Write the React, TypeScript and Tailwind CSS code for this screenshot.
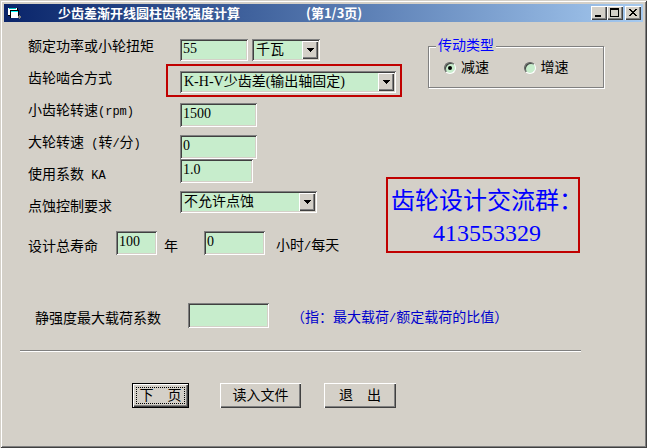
import React, { useState } from "react";

const sunken =
  "shadow-[inset_1px_1px_0_#808080,inset_-1px_-1px_0_#fff,inset_2px_2px_0_#404040,inset_-2px_-2px_0_#d4d0c8]";
const raised =
  "bg-[#d4d0c8] shadow-[inset_1px_1px_0_#fff,inset_-1px_-1px_0_#404040,inset_-2px_-2px_0_#808080]";

interface FieldProps {
  id: string;
  value?: string;
  label?: string;
  className: string;
}

function TextField({ id, value = "", label, className }: FieldProps) {
  return (
    <input
      id={id}
      type="text"
      aria-label={label}
      defaultValue={value}
      className={`block bg-[#c7edcc] px-[3px] pb-0.5 outline-none ${sunken} ${className}`}
    />
  );
}

interface ComboProps {
  id: string;
  options: string[];
  label?: string;
  className: string;
}

function Combo({ id, options, label, className }: ComboProps) {
  return (
    <div className={`relative h-[22px] ${className}`}>
      <select
        id={id}
        aria-label={label}
        className={`block h-full w-full appearance-none bg-[#c7edcc] pl-1 pr-5 outline-none ${sunken}`}
      >
        {options.map((option) => (
          <option key={option}>{option}</option>
        ))}
      </select>
      <span
        className={`pointer-events-none absolute inset-y-0.5 right-0.5 flex w-4 items-center justify-center ${raised}`}
      >
        <svg width="7" height="4" viewBox="0 0 7 4" shapeRendering="crispEdges">
          <path d="M0 0h7v1h-1v1h-1v1h-1v1h-1v-1h-1v-1h-1v-1h-1z" />
        </svg>
      </span>
    </div>
  );
}

interface RadioProps {
  label: string;
  checked: boolean;
  onSelect: () => void;
}

function Radio({ label, checked, onSelect }: RadioProps) {
  return (
    <label className="flex w-20 items-center gap-[5px]">
      <span className="relative flex size-3 items-center justify-center">
        <input
          type="radio"
          name="drive"
          checked={checked}
          onChange={onSelect}
          className="size-3 appearance-none rounded-full border border-t-[#606060] border-r-white border-b-white border-l-[#606060] bg-[#c7edcc] shadow-[inset_1px_1px_0_#404040]"
        />
        {checked && <span className="pointer-events-none absolute size-1 rounded-full bg-black" />}
      </span>
      {label}
    </label>
  );
}

function Mono({ children }: { children: React.ReactNode }) {
  return <span className="whitespace-pre font-['Liberation_Mono',monospace] text-[12px]">{children}</span>;
}

function TitleBar() {
  return (
    <header className="flex h-[18px] items-center bg-gradient-to-r from-[#0a246a] to-[#a6caf0] pl-1 pr-0.5 font-['Noto_Sans_CJK_SC',sans-serif] text-[13px] font-bold text-white">
      <svg width="14" height="12" viewBox="0 0 14 12" shapeRendering="crispEdges">
        <path fill="#000" d="M0 1h10v8H0z" />
        <path fill="#fff" d="M0 1h9v7H0z" />
        <path fill="#00c0c0" d="M1 1h7v1H1z" />
        <path fill="#000" d="M2 3h9v8H2z" />
        <path fill="#00ffff" d="M3 4h7v1H3z" />
        <path fill="#fff" d="M3 5h7v6H3z" />
        <path fill="#808080" d="M11 8h1v1h1v2h-1v1h-1v-1h-1V9h1z" />
      </svg>
      <h1 className="flex gap-[66px] whitespace-nowrap pl-9">
        <span>少齿差渐开线圆柱齿轮强度计算</span>
        <span>(第1/3页)</span>
      </h1>
      <div className="ml-auto flex">
        <button type="button" aria-label="最小化" className={`h-[14px] w-4 ${raised}`}>
          <svg width="16" height="14" viewBox="0 0 16 14" shapeRendering="crispEdges">
            <path d="M4 9h6v2H4z" />
          </svg>
        </button>
        <button type="button" aria-label="最大化" className={`h-[14px] w-4 ${raised}`}>
          <svg width="16" height="14" viewBox="0 0 16 14" shapeRendering="crispEdges">
            <path fillRule="evenodd" d="M3 2h9v9H3zM4 4v6h7V4z" />
          </svg>
        </button>
        <button type="button" aria-label="关闭" className={`ml-0.5 h-[14px] w-4 ${raised}`}>
          <svg width="16" height="14" viewBox="0 0 16 14" shapeRendering="crispEdges">
            <path d="M4 3h2v1h1v1h2V4h1V3h2v1h-1v1h-1v1H9v1h1v1h1v1h1v1h-2V9H9V8H7v1H6v1H4V9h1V8h1V7h1V6H6V5H5V4H4z" />
          </svg>
        </button>
      </div>
    </header>
  );
}

export default function App() {
  const [drive, setDrive] = useState("减速");

  return (
    <div className="min-h-screen bg-[#d4d0c8] p-1 font-['Liberation_Serif','Noto_Sans_CJK_SC',serif] text-[14px] leading-4 text-black shadow-[inset_1px_1px_0_#d4d0c8,inset_-1px_-1px_0_#404040,inset_2px_2px_0_#fff,inset_-2px_-2px_0_#808080]">
      <TitleBar />

      <form onSubmit={(e) => e.preventDefault()} className="px-6 pt-4 whitespace-nowrap">
        <div className="flex items-start">
          <div className="grid w-[152px] shrink-0 auto-rows-[16px] gap-4 pt-px">
            <label htmlFor="power">额定功率或小轮扭矩</label>
            <label htmlFor="mesh">齿轮啮合方式</label>
            <label htmlFor="pinion">
              小齿轮转速<Mono>(rpm)</Mono>
            </label>
            <label htmlFor="wheel">
              大轮转速<Mono>{" ("}</Mono>转<Mono>/</Mono>分<Mono>)</Mono>
            </label>
            <label htmlFor="ka">
              使用系数<Mono>{" KA"}</Mono>
            </label>
            <label htmlFor="pitting">点蚀控制要求</label>
          </div>

          <div className="w-[222px] shrink-0 pt-px">
            <div className="flex h-8 gap-1">
              <TextField id="power" value="55" className="h-[22px] w-[68px]" />
              <Combo id="unit" label="单位" options={["千瓦"]} className="w-[68px]" />
            </div>
            <div className="relative h-8">
              <Combo id="mesh" options={["K-H-V少齿差(输出轴固定)"]} className="w-[216px]" />
              <div className="pointer-events-none absolute -top-[7px] -left-[14px] h-[33px] w-[236px] border-2 border-[#c00000]" />
            </div>
            <div className="h-8">
              <TextField id="pinion" value="1500" className="h-6 w-[77px]" />
            </div>
            <div className="h-6">
              <TextField id="wheel" value="0" className="h-6 w-[77px]" />
            </div>
            <div className="h-8">
              <TextField id="ka" value="1.0" className="h-6 w-[73px]" />
            </div>
            <Combo id="pitting" options={["不允许点蚀"]} className="w-[137px]" />
          </div>

          <div className="shrink-0">
            <fieldset className="ml-[26px] h-[50px] w-[176px] min-w-0 border border-[#808080] pl-[15px] shadow-[1px_1px_0_#fff,inset_1px_1px_0_#fff]">
              <legend className="-ml-2 bg-[#d4d0c8] px-0.5 text-[#0000ff]">传动类型</legend>
              <div className="flex pt-1.5">
                <Radio label="减速" checked={drive === "减速"} onSelect={() => setDrive("减速")} />
                <Radio label="增速" checked={drive === "增速"} onSelect={() => setDrive("增速")} />
              </div>
            </fieldset>
            <div className="mt-[89px] -ml-4 h-[76px] w-[194px] border-2 border-[#c00000] pt-1.5 pl-[3px] text-[24px] leading-8 text-[#0000ff]">
              <p>齿轮设计交流群：</p>
              <p className="pl-[42px]">413553329</p>
            </div>
          </div>
        </div>

        <div className="-mt-[22px] flex items-end">
          <label htmlFor="years" className="w-[88px]">设计总寿命</label>
          <TextField id="years" value="100" className="h-6 w-[41px]" />
          <span className="w-[47px] pl-[7px]">年</span>
          <TextField id="hours" label="小时/每天" value="0" className="h-6 w-[61px]" />
          <span className="pl-[11px]">
            小时<Mono>/</Mono>每天
          </span>
        </div>

        <div className="mt-12 flex items-center pl-[7px]">
          <label htmlFor="static" className="w-[153px] pt-1.5">静强度最大载荷系数</label>
          <TextField id="static" className="h-[25px] w-[81px]" />
          <span className="pl-[22px] pt-1.5 text-[#0000cc]">
            （指：最大载荷<Mono>/</Mono>额定载荷的比值）
          </span>
        </div>

        <hr className="mt-[22px] mr-[38px] -ml-2 h-0.5 border-t border-b border-t-[#808080] border-b-white" />

        <div className="mt-[31px] flex pl-[104px]">
          <button
            type="submit"
            className="h-[25px] w-[57px] border border-black bg-[#d4d0c8] p-[3px] shadow-[inset_1px_1px_0_#fff,inset_-1px_-1px_0_#404040,inset_-2px_-2px_0_#808080]"
          >
            <span className="flex h-full items-center justify-center border border-dotted border-black">下　页</span>
          </button>
          <button type="button" className={`ml-[31px] h-[25px] w-[81px] ${raised}`}>
            读入文件
          </button>
          <button type="button" className={`ml-[23px] h-[25px] w-[72px] ${raised}`}>
            退　出
          </button>
        </div>
      </form>
    </div>
  );
}
